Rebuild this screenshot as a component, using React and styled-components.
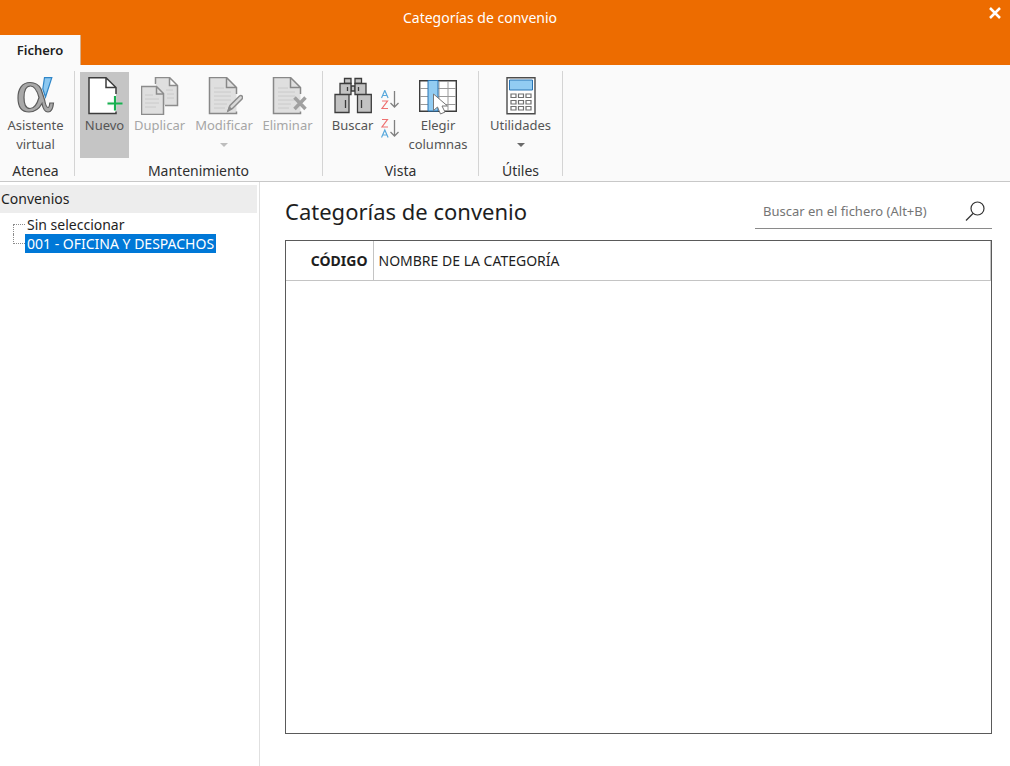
import React from "react";
import styled, { createGlobalStyle } from "styled-components";

const GlobalStyle = createGlobalStyle`
  *, *::before, *::after { box-sizing: border-box; }
  body {
    margin: 0;
    background: #ffffff;
    color: #1e1e1e;
    font: 14px/19px "Noto Sans", "Open Sans", sans-serif;
  }
  button, input { font: inherit; color: inherit; }
`;

const Window = styled.div`
  display: flex;
  flex-direction: column;
  min-height: 100vh;
`;

const Header = styled.header`
  display: flex;
  flex-direction: column;
  background: #ed6c00;
`;

const TitleBar = styled.div`
  display: flex;
  align-items: center;
  height: 35px;
`;

const WindowTitle = styled.div`
  flex: 1;
  padding-right: 20px;
  color: #ffffff;
  text-align: center;
`;

const CloseButton = styled.button`
  display: flex;
  align-self: flex-start;
  justify-content: center;
  align-items: center;
  width: 30px;
  height: 25px;
  padding: 0;
  border: 0;
  background: transparent;
`;

const Tabs = styled.nav`
  display: flex;
  height: 30px;
`;

const Tab = styled.button`
  padding: 0 15px;
  width: 81px;
  border: 0;
  background: #fafafa;
  border-right: 1px solid #d8b08c;
  color: #1e1e1e;
  font-size: 13px;
  font-weight: 600;
  text-align: center;
`;

const Ribbon = styled.div`
  display: flex;
  padding: 6px 0 5px;
  background: #fafafa;
  border-bottom: 1px solid #c8c8c8;
`;

const Group = styled.section`
  display: flex;
  flex-direction: column;
  padding: 1px ${(p) => (p.$flush ? "3px 0 0" : "5px 0 5px")};
  border-right: 1px solid #d4d4d4;
`;

const Tools = styled.div`
  display: flex;
  height: 86px;
`;

const GroupLabel = styled.h2`
  margin: 0;
  padding-top: 3px;
  height: 18px;
  font-size: 14px;
  line-height: 19px;
  font-weight: 400;
  text-align: center;
  color: #303030;
`;

const Tool = styled.button`
  display: flex;
  flex-direction: column;
  align-items: center;
  width: ${(p) => p.$width}px;
  padding: 5px 0 0;
  border: 0;
  background: ${(p) => (p.$active ? "#c5c5c5" : "transparent")};
  color: ${(p) => (p.disabled ? "#a6a6a6" : "#555555")};
  font-size: 13px;
  white-space: pre-line;
`;

const ToolLabel = styled.span`
  padding-top: 1px;
`;

const Caret = styled.span`
  margin-top: 8px;
  border: 4px solid transparent;
  border-top-color: ${(p) => (p.$muted ? "#bdbdbd" : "#6a6a6a")};
  border-bottom: 0;
`;

const SortTools = styled.div`
  display: flex;
  flex-direction: column;
  gap: 8px;
  width: 26px;
  padding-top: 18px;
`;

const SortButton = styled.button`
  display: flex;
  justify-content: center;
  height: 21px;
  padding: 0;
  border: 0;
  background: transparent;
`;

const Body = styled.div`
  display: flex;
  flex: 1;
`;

const Sidebar = styled.aside`
  flex: 0 0 260px;
  padding: 3px 2px 0 0;
  border-right: 1px solid #e0e0e0;
`;

const SidebarTitle = styled.h2`
  margin: 0;
  height: 28px;
  padding: 0 1px;
  background: #ededed;
  font-size: 14px;
  line-height: 28px;
  font-weight: 400;
`;

const Tree = styled.ul`
  margin: 0;
  padding: 2px 0 0 13px;
  list-style: none;
`;

const TreeRow = styled.li`
  display: flex;
  height: 19px;
`;

const Connector = styled.span`
  width: 12px;
  height: 10px;
  border-left: 1px dotted #8c8c8c;
  align-self: ${(p) => (p.$last ? "flex-start" : "flex-end")};
  ${(p) => (p.$last ? "border-bottom" : "border-top")}: 1px dotted #8c8c8c;
`;

const TreeItem = styled.button`
  padding: 0 2px;
  border: 0;
  background: ${(p) => (p.$selected ? "#0078d7" : "transparent")};
  color: ${(p) => (p.$selected ? "#ffffff" : "#1e1e1e")};
  line-height: 19px;
  white-space: nowrap;
`;

const Main = styled.main`
  display: flex;
  flex: 1;
  flex-direction: column;
  padding: 12px 18px 32px 25px;
`;

const Heading = styled.div`
  display: flex;
  justify-content: space-between;
  height: 46px;
`;

const PageTitle = styled.h1`
  margin: 0;
  font-size: 22px;
  line-height: 34px;
  font-weight: 400;
`;

const Search = styled.form`
  display: flex;
  width: 237px;
  height: 35px;
  border-bottom: 1px solid #8a8a8a;
`;

const SearchInput = styled.input`
  flex: 1;
  min-width: 0;
  padding: 0 8px;
  border: 0;
  outline: 0;
  background: transparent;
  font-size: 13px;
  &::placeholder { color: #757575; opacity: 1; }
`;

const SearchButton = styled.button`
  display: flex;
  align-items: center;
  justify-content: center;
  width: 34px;
  padding: 0;
  border: 0;
  background: transparent;
`;

const TableFrame = styled.div`
  flex: 1;
  border: 1px solid #5a5a5a;
`;

const Table = styled.table`
  width: 100%;
  border-collapse: collapse;
  table-layout: fixed;
`;

const HeadCell = styled.th`
  height: 39px;
  width: ${(p) => (p.$code ? "87px" : "auto")};
  padding: 0 5px;
  border-bottom: 1px solid #c4c4c4;
  border-right: 1px solid #c4c4c4;
  font-size: 14px;
  font-weight: ${(p) => (p.$code ? 700 : 400)};
  text-align: ${(p) => (p.$code ? "right" : "left")};
`;

const Icon = ({ w = 38, h = 38, children }) => (
  <svg width={w} height={h} viewBox={`0 0 ${w} ${h}`} fill="none" aria-hidden="true">
    {children}
  </svg>
);

const AlphaIcon = () => (
  <Icon>
    <path
      fillRule="evenodd"
      d="M24 12C22 8 18 5.500 13 5.500C5 5.500 1 12 1 21C1 30 5 35 12 35C18 35 22 32 25 26.500C26 32 28 35 31 35C34.500 35 36 32 36.500 26H32.800C32.500 29 32 30.500 31 30.500C29.500 30.500 28.500 28 27.500 22.500ZM13.500 9C17.500 9 20 13 22 20.500C20 27.500 17.500 31.500 13 31.500C8.500 31.500 7 27 7 20.500C7 13.500 9 9 13.500 9Z"
      fill="#a8a8a8" stroke="#5c5c5c" strokeWidth="1.200"
    />
    <path d="M27.500 .700H34.800L28.500 20L25.800 12Z" fill="#8cc8f0" stroke="#2f86c8" strokeWidth="1.200" />
  </Icon>
);

const NewIcon = () => (
  <Icon>
    <path d="M30 17V10.500L20 .700H3V36.500H30Z" fill="#fff" />
    <path d="M30 17V10.500L20 .700H3V36.500H30V34.500M20 1V10.500H30" stroke="#3c3c3c" strokeWidth="1.500" />
    <path d="M29 19V33.500M21.500 26.500H36.500" stroke="#c5e8d0" strokeWidth="4" opacity="0.3" />
    <path d="M29 19V33.500M21.500 26.500H36.500" stroke="#18b050" strokeWidth="2" />
  </Icon>
);

const CopyIcon = () => (
  <Icon>
    <path d="M14.500 7V.500H28.500L36.500 8.500V28.500H24M28.500 1V8.500H36" fill="#dfdfdf" stroke="#8c8c8c" strokeWidth="1.500" />
    <path d="M15 6V28H24V17Z" fill="#dfdfdf" />
    <path d="M.500 9.500H15.500L22.500 16.500V37.500H.500ZM15.500 10V17H22.500" fill="#dfdfdf" stroke="#8c8c8c" strokeWidth="1.500" />
    <path d="M4 18H12M4 22H18M4 26H18M4 30H15M25 13H32M26 17H33M26 21H33" stroke="#cacaca" />
  </Icon>
);

const MutedPage = () => (
  <>
    <path d="M31.500 17V10.500L21.500.500H4.500V36.500H31.500Z" fill="#dfdfdf" />
    <path d="M31.500 17V10.500L21.500.500H4.500V36.500H31.500V34.500M21.500 1V10.500H31.500" stroke="#888" strokeWidth="1.500" />
    <path d="M9 11H19M9 15H26M9 19H26M9 23H26M9 27H22M9 31H20" stroke="#cacaca" />
  </>
);

const EditIcon = () => (
  <Icon>
    <MutedPage />
    <path d="M23 34L25 28.500L34.500 19Q36 18 37.300 19.300Q38 20.500 37 22L27.500 31.500Z" fill="#dadada" stroke="#8c8c8c" strokeWidth="1.500" />
    <path d="M22 35L24 29L27.500 32Z" fill="#8c8c8c" />
  </Icon>
);

const DeleteIcon = () => (
  <Icon>
    <MutedPage />
    <path d="M25.500 20.500L36.500 32M36.500 20.500L25.500 32" stroke="#a0a0a0" strokeWidth="3.500" />
  </Icon>
);

const BinocularsIcon = () => (
  <Icon>
    <g fill="#c2c2c2" stroke="#3c3c3c" strokeWidth="1.300">
      <path d="M10.500 1.500H17V6.500H10.500ZM21 1.500H27.500V6.500H21ZM17 9H21V14H17Z" />
      <path d="M6 6.500H17V17.500H6ZM21 6.500H32V17.500H21ZM1 17.500H15V35.500H1ZM23.500 17.500H37.300V35.500H23.500Z" />
      <path d="M13.500 10V14M24.500 10V14M11.500 23V31M27.500 23V31" />
    </g>
  </Icon>
);

const GridIcon = () => (
  <Icon>
    <path d="M.700 3.700H37.300V34.300H.700Z" fill="#fff" stroke="#3c3c3c" strokeWidth="1.400" />
    <path d="M1 11.500H37M1 19.500H37M1 27.500H37M20 4V34M29 4V34" stroke="#9a9a9a" />
    <path d="M9 3.500H19V34H9Z" fill="#92ccf2" stroke="#2874b4" />
    <path d="M14.500 17V33.500L18.500 30L21.500 37L26 35L23 29H28.500Z" fill="#fff" stroke="#777" />
  </Icon>
);

const CalculatorIcon = () => (
  <Icon>
    <path d="M5 .700H33V36.800H5Z" fill="#fff" stroke="#4c4c4c" strokeWidth="1.400" />
    <path d="M7.500 3H30.500V13H7.500Z" fill="#92ccf2" stroke="#2874b4" />
    <path
      d="M9 17H14V20.500H9ZM16.500 17H21.500V20.500H16.500ZM24 17H29V20.500H24ZM9 23.500H14V27H9ZM16.500 23.500H21.500V27H16.500ZM24 23.500H29V27H24ZM9 29.500H14V33H9ZM16.500 29.500H21.500V33H16.500ZM24 29.500H29V33H24Z"
      stroke="#707070" strokeWidth="1.200"
    />
  </Icon>
);

const SortIcon = ({ descending }) => {
  const letterA = "M.500 8L3.800.500L7.100 8M1.800 5.500H5.800";
  const letterZ = "M1 .500H6.500L1 8H7";
  return (
    <Icon w={19} h={20}>
      <path d={descending ? letterZ : letterA} stroke={descending ? "#ee7070" : "#58a8dc"} strokeWidth="1.200" />
      <g transform="translate(0 10.500)">
        <path d={descending ? letterA : letterZ} stroke={descending ? "#58a8dc" : "#ee7070"} strokeWidth="1.200" />
      </g>
      <path d="M13.500 1V17M9.500 13L13.500 17L17.500 13" stroke="#808080" strokeWidth="1.300" />
    </Icon>
  );
};

function ToolButton({ icon, label, width, active, disabled, menu }) {
  return (
    <Tool type="button" $width={width} $active={active} disabled={disabled} aria-haspopup={menu ? "menu" : undefined}>
      {icon}
      <ToolLabel>{label}</ToolLabel>
      {menu && <Caret $muted={disabled} />}
    </Tool>
  );
}

export default function App() {
  return (
    <Window>
      <GlobalStyle />
      <Header>
        <TitleBar>
          <WindowTitle>Categorías de convenio</WindowTitle>
          <CloseButton type="button" aria-label="Cerrar">
            <Icon w={12} h={12}>
              <path d="M1 1L11 11M11 1L1 11" stroke="#fff" strokeWidth="2.500" />
            </Icon>
          </CloseButton>
        </TitleBar>
        <Tabs>
          <Tab type="button">Fichero</Tab>
        </Tabs>
      </Header>

      <Ribbon>
        <Group $flush>
          <Tools>
            <ToolButton icon={<AlphaIcon />} label={"Asistente\nvirtual"} width={71} />
          </Tools>
          <GroupLabel>Atenea</GroupLabel>
        </Group>
        <Group>
          <Tools>
            <ToolButton icon={<NewIcon />} label="Nuevo" width={49} active />
            <ToolButton icon={<CopyIcon />} label="Duplicar" width={61} disabled />
            <ToolButton icon={<EditIcon />} label="Modificar" width={68} disabled menu />
            <ToolButton icon={<DeleteIcon />} label="Eliminar" width={59} disabled />
          </Tools>
          <GroupLabel>Mantenimiento</GroupLabel>
        </Group>
        <Group>
          <Tools>
            <ToolButton icon={<BinocularsIcon />} label="Buscar" width={49} />
            <SortTools>
              <SortButton type="button" aria-label="Orden ascendente"><SortIcon /></SortButton>
              <SortButton type="button" aria-label="Orden descendente"><SortIcon descending /></SortButton>
            </SortTools>
            <ToolButton icon={<GridIcon />} label={"Elegir\ncolumnas"} width={70} />
          </Tools>
          <GroupLabel>Vista</GroupLabel>
        </Group>
        <Group>
          <Tools>
            <ToolButton icon={<CalculatorIcon />} label="Utilidades" width={73} menu />
          </Tools>
          <GroupLabel>Útiles</GroupLabel>
        </Group>
      </Ribbon>

      <Body>
        <Sidebar>
          <SidebarTitle>Convenios</SidebarTitle>
          <Tree>
            <TreeRow>
              <Connector />
              <TreeItem type="button">Sin seleccionar</TreeItem>
            </TreeRow>
            <TreeRow>
              <Connector $last />
              <TreeItem type="button" $selected>001 - OFICINA Y DESPACHOS</TreeItem>
            </TreeRow>
          </Tree>
        </Sidebar>

        <Main>
          <Heading>
            <PageTitle>Categorías de convenio</PageTitle>
            <Search onSubmit={(e) => e.preventDefault()}>
              <SearchInput type="text" aria-label="Buscar en el fichero" placeholder="Buscar en el fichero (Alt+B)" />
              <SearchButton type="submit" aria-label="Buscar">
                <Icon w={20} h={20}>
                  <circle cx="12.500" cy="7.500" r="6.500" stroke="#333" strokeWidth="1.200" />
                  <path d="M8 12.500L1 19.500" stroke="#333" strokeWidth="1.200" />
                </Icon>
              </SearchButton>
            </Search>
          </Heading>
          <TableFrame>
            <Table>
              <thead>
                <tr>
                  <HeadCell scope="col" $code>CÓDIGO</HeadCell>
                  <HeadCell scope="col">NOMBRE DE LA CATEGORÍA</HeadCell>
                </tr>
              </thead>
            </Table>
          </TableFrame>
        </Main>
      </Body>
    </Window>
  );
}
